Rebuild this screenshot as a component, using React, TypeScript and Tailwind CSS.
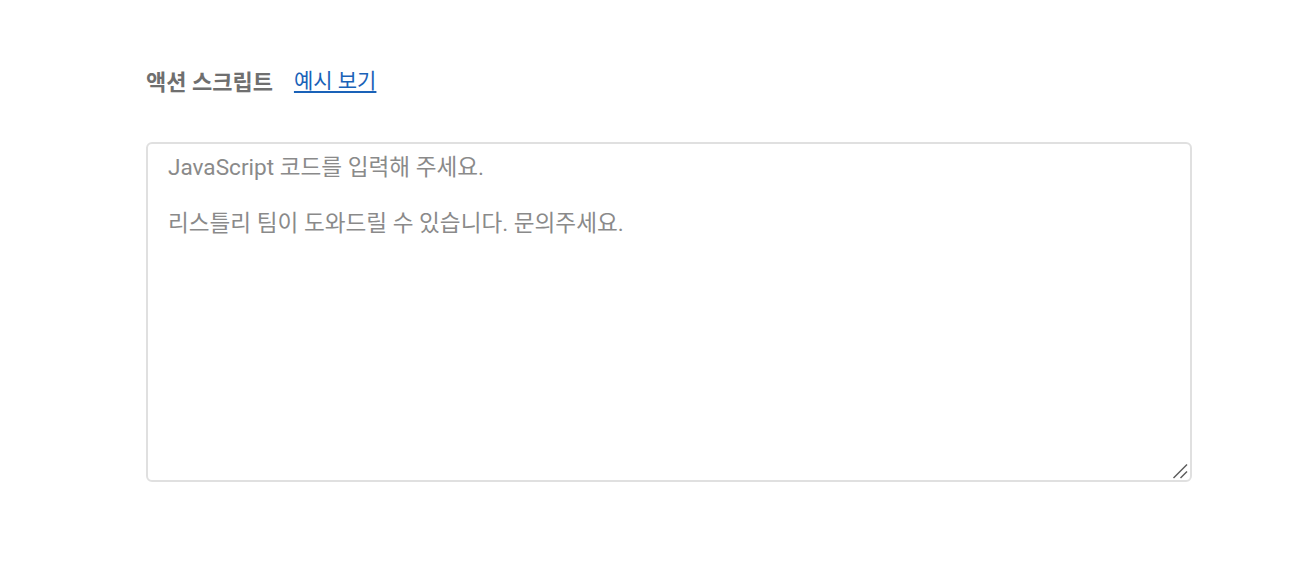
import { useState } from "react";

const placeholder =
  "JavaScript 코드를 입력해 주세요.\n\n리스틀리 팀이 도와드릴 수 있습니다. 문의주세요.";

// 오른쪽 아래 크기 조절 핸들
const ResizeGrip = () => (
  <svg
    className="pointer-events-none absolute right-[4px] bottom-[3px]"
    width="16"
    height="16"
    viewBox="0 0 16 16"
  >
    <path d="M1.5 15 L15 1.5" stroke="#5a5a5a" strokeWidth="1.4" />
    <path d="M8.5 15 L15 8.5" stroke="#5a5a5a" strokeWidth="1.4" />
  </svg>
);

export default function App() {
  const [code, setCode] = useState("");

  return (
    <div
      className="min-h-[566px] w-full bg-white pt-[66px] pl-[146px]"
      style={{ fontFamily: 'Roboto, "Noto Sans CJK KR", sans-serif' }}
    >
      {/* 라벨 */}
      <div className="flex items-center gap-[21px] h-[32px]">
        <span className="text-[22px] font-bold text-[#6f6f6f]">액션 스크립트</span>
        <a href="#" className="text-[21px] text-[#1a62b8] underline underline-offset-[3px]">
          예시 보기
        </a>
      </div>

      {/* 스크립트 입력 */}
      <div className="relative mt-[44px] w-[1046px]">
        <textarea
          value={code}
          onChange={(e) => setCode(e.target.value)}
          placeholder={placeholder}
          className="block w-[1046px] h-[340px] resize-none rounded-[6px] border-2 border-[#e0e0e0] px-[20px] py-[10px] text-[22.6px] leading-[28px] text-[#333] placeholder:text-[#8a8a8a] outline-none"
        />
        <ResizeGrip />
      </div>
    </div>
  );
}
